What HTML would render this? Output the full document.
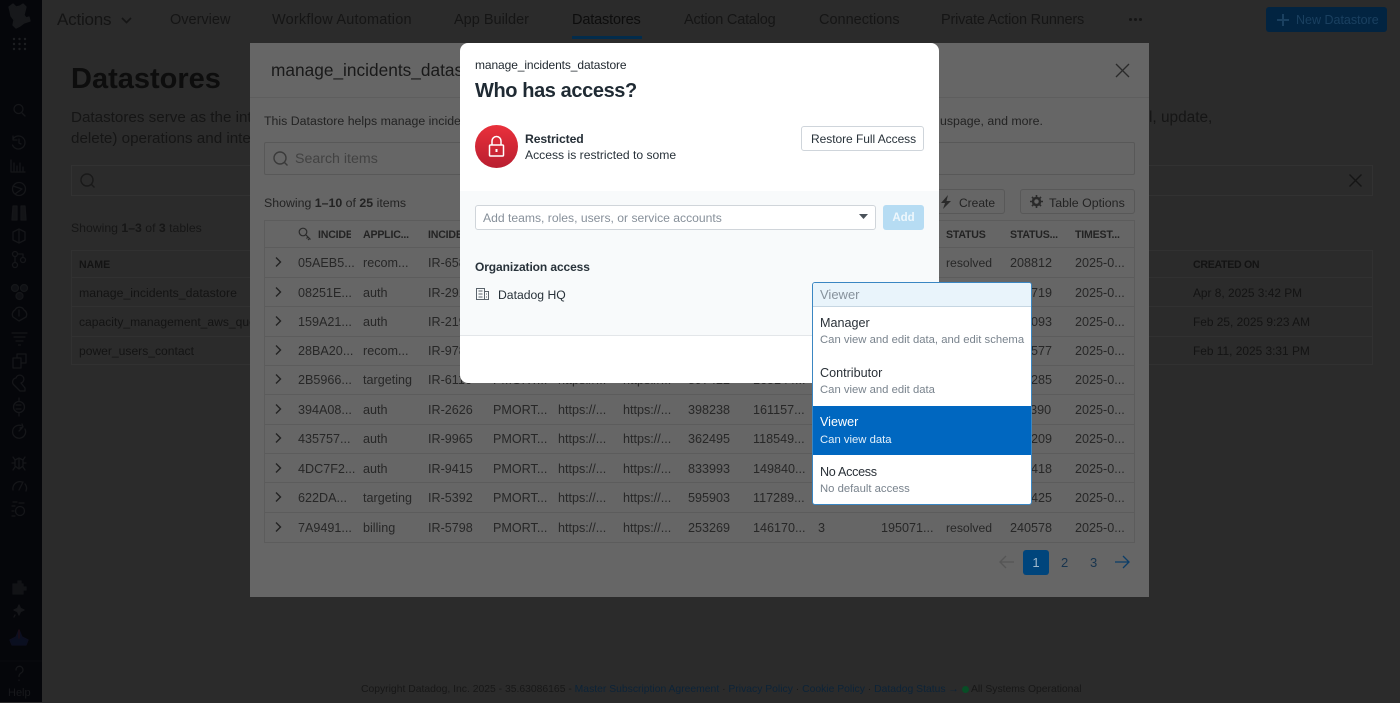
<!DOCTYPE html>
<html lang="en"><head><meta charset="utf-8"><title>Datastores</title>
<style>
html,body{margin:0;padding:0}
html{background:#2b2b2b}
body{width:1400px;height:702px;position:relative;overflow:hidden;background:#2b2b2b;font-family:"Liberation Sans","Noto Sans CJK JP",sans-serif;color:#161616;filter:blur(.3px)}
.a{position:absolute}
.t{position:absolute;white-space:nowrap;line-height:20px;height:20px}
b{font-weight:700}
#side{left:0;top:0;width:42px;height:702px;background:#05060a}
#side svg{position:absolute;left:0;top:0;opacity:.6}
.n{font-size:14.500px;top:10px;color:#151515}
.bt{font-size:12.100px;color:#131313}
.dt{font-size:11.900px;color:#131313}
#m1{left:250px;top:43px;width:899px;height:554px;background:#666;overflow:hidden}
#m1 .t{color:#232323}
.r{position:absolute;left:15px;width:870px;height:29px;border-bottom:1px solid #5c5c5c;font-size:12.600px}
.r span{position:absolute;top:5px;line-height:20px;white-space:nowrap;color:#272727}
.r svg{position:absolute;left:8px;top:8px}
.c1{left:33px}.c2{left:98px}.c3{left:163px}.c4{left:228px}.c5{left:293px}.c6{left:358px}.c7{left:423px}.c8{left:488px}.c9{left:553px}.c10{left:616px}.c11{left:681px;font-size:12.200px}.c12{left:745px}.c13{left:810px}
.h{font-size:10.600px;font-weight:700;letter-spacing:-.2px}
#m2{left:460px;top:43px;width:479px;height:340px;background:#fff;border-radius:8px;overflow:hidden}
#m2 .t{color:#28323a}
#dd{left:812px;top:282px;width:218px;height:221px;background:#fff;border:1px solid #3a86c2;border-radius:3px;overflow:hidden}
.op{position:absolute;left:0;width:218px;height:49px}
.op .x{position:absolute;left:7px;top:6px;font-size:12.600px;line-height:20px;color:#2a3138;white-space:nowrap}
.op .y{position:absolute;left:7px;top:25px;font-size:11.300px;line-height:18px;color:#79838d;white-space:nowrap}
</style></head><body>

<div class="a" id="side">
<svg width="42" height="702" fill="none" stroke="#202124" stroke-width="1.300" stroke-linecap="round" stroke-linejoin="round">
<path d="M9 7l4-3 3 3 4-1 3-2 3 3-1 4-1 4 2 3 3-1 1 4-6 2-4 3-4 2-3-3 1-5-3-4-1-5z" fill="#232427" stroke="#232427"/>
<g fill="#2d2e31" stroke="none"><circle cx="14" cy="39" r="1.200"/><circle cx="19.500" cy="39" r="1.200"/><circle cx="25" cy="39" r="1.200"/><circle cx="14" cy="44" r="1.200"/><circle cx="19.500" cy="44" r="1.200"/><circle cx="25" cy="44" r="1.200"/><circle cx="14" cy="49" r="1.200"/><circle cx="19.500" cy="49" r="1.200"/><circle cx="25" cy="49" r="1.200"/></g>
<circle cx="18.500" cy="109" r="4.500"/><path d="M22 113l3 3"/>
<path d="M13 139a6.500 6.500 0 1 1-.5 6M13 136v4h4M19 139v4l2 1"/>
<path d="M11 160v12h14M14 171v-8M17 171v-5M20 171v-8M23 171v-4"/>
<circle cx="19" cy="189" r="6.500"/><path d="M13 186l9 3-7 5"/>
<path d="M13 206h4v14h-5zM21 206h4l1 14h-5z" fill="#1d1e21"/>
<path d="M19 229l6 3v8l-6 3-6-3v-8zM19 229v14"/>
<circle cx="15" cy="254" r="2.500"/><circle cx="23" cy="260" r="2.500"/><circle cx="15" cy="265" r="2.500"/><path d="M15 257v5M18 254h5v3"/>
<circle cx="15" cy="288" r="3.500" fill="#17181b"/><circle cx="24" cy="288" r="3.500" fill="#17181b"/><circle cx="19.500" cy="296" r="3.500" fill="#17181b"/>
<path d="M13 317a5 5 0 0 1 2-7 5 5 0 0 1 9 0 5 5 0 0 1 2 7l-7 4z"/><path d="M19 310v6"/>
<path d="M12 333h15M14 337h11M16 341h7M18.500 345h2"/>
<path d="M13 358h4v-4h9v9h-5v5h-8zM13 358h8v5"/>
<path d="M16 378a4 4 0 1 1 5 5l4 5v3h-5l-6-6a4 4 0 0 1 2-7z"/>
<circle cx="19" cy="407" r="5.500"/><path d="M19 401v-3M19 413v3M16 405h5M16 409h5"/>
<path d="M25 429a6.500 6.500 0 1 1-4-3.500M19 431l3-3M22 424l1 3-3 1"/>
<path d="M15 460l4-2 4 2v6l-4 3-4-3zM13 457l2 3M25 457l-2 3M12 463h3M23 463h3M13 470l2-3M25 470l-2-3M19 458v10"/>
<path d="M13 490a7 7 0 0 1 9-8M25 484a7 7 0 0 1 1 7M19 490l4-8"/>
<circle cx="20" cy="511" r="4.500"/><path d="M13 502h4M12 506h3M12 511h2M12 516h3M19 503h5"/>
<path d="M13 584h5v-3h3v3h2v3h3v3h-3v4H13z" fill="#1b1c1f" stroke="#1b1c1f"/>
<path d="M19 605l1.500 3.500 3.500 1.500-3.500 1.500-1.500 3.500-1.500-3.500-3.500-1.500 3.500-1.500zM15 615l-1 2" fill="#222326"/>
<path d="M19 630l3 7 6 3-2 5h-14l-2-5 6-3z" fill="#0e1530" stroke="#11142e"/><path d="M19 630v8" stroke="#33131c"/>
<path d="M16 670a3.500 3.500 0 1 1 5 3c-1.500 1-2 2-2 3.500M19 680v.5"/>
<path d="M0 661h42" stroke="#0c0d10" stroke-width="1"/>
</svg>
<div class="t" style="left:8px;top:683px;font-size:11px;color:#18191c">Help</div>
</div>

<!-- nav -->
<div class="t" style="left:57px;top:10px;font-size:17px;color:#141414;letter-spacing:-.2px">Actions</div>
<svg class="a" style="left:120px;top:16px" width="13" height="10" fill="none" stroke="#151515" stroke-width="1.600"><path d="M2 2l4.500 4.500L11 2"/></svg>
<div class="t n" style="left:170px">Overview</div>
<div class="t n" style="left:272px;letter-spacing:.2px">Workflow Automation</div>
<div class="t n" style="left:454px">App Builder</div>
<div class="t n" style="left:572px;color:#0d0d0d;letter-spacing:-.15px">Datastores</div>
<div class="a" style="left:572px;top:36px;width:70px;height:3px;background:#022c4c"></div>
<div class="t n" style="left:684px;letter-spacing:-.2px">Action Catalog</div>
<div class="t n" style="left:819px">Connections</div>
<div class="t n" style="left:941px;letter-spacing:-.2px">Private Action Runners</div>
<div class="a" style="left:1129px;top:18px;width:3px;height:3px;background:#151515;border-radius:50%;box-shadow:5px 0 #151515,10px 0 #151515"></div>
<div class="a" style="left:1266px;top:7px;width:121px;height:25px;background:#022441;border-radius:3px"></div>
<svg class="a" style="left:1276px;top:13px" width="14" height="14" fill="none" stroke="#1a4060" stroke-width="2"><path d="M7 1v12M1 7h12"/></svg>
<div class="t" style="left:1296px;top:10px;font-size:12.500px;color:#1a4060">New Datastore</div>

<!-- page -->
<div class="t" style="left:71px;top:61px;height:36px;line-height:36px;font-size:29px;font-weight:700;color:#0d0d0d">Datastores</div>
<div class="t" style="left:71px;top:108px;font-size:15.200px;color:#151515">Datastores serve as the int</div>
<div class="t" style="left:71px;top:129px;font-size:15.200px;color:#151515">delete) operations and inte</div>
<div class="t" style="left:1149px;top:108px;font-size:15.400px;color:#151515">l, update,</div>
<div class="a" style="left:71px;top:165px;width:1302px;height:31px;border:1px solid #323232;box-sizing:border-box"></div>
<svg class="a" style="left:79px;top:172px" width="18" height="18" fill="none" stroke="#191919" stroke-width="1.400"><circle cx="8" cy="8" r="6"/><path d="M12.500 12.500l3 3"/></svg>
<svg class="a" style="left:1348px;top:173px" width="15" height="15" fill="none" stroke="#151515" stroke-width="1.400"><path d="M1.500 1.500l12 12M13.500 1.500l-12 12"/></svg>
<div class="t" style="left:71px;top:218px;font-size:12.250px;color:#161616">Showing <b>1–3</b> of <b>3</b> tables</div>
<div class="a" style="left:71px;top:250px;width:1302px;height:115px;border:1px solid #313131;box-sizing:border-box"></div>
<div class="a" style="left:72px;top:277px;width:1300px;height:1px;background:#313131"></div>
<div class="a" style="left:72px;top:306px;width:1300px;height:1px;background:#313131"></div>
<div class="a" style="left:72px;top:336px;width:1300px;height:1px;background:#313131"></div>
<div class="t h" style="left:79px;top:255px;color:#131313;letter-spacing:0">NAME</div>
<div class="t bt" style="left:79px;top:283px;font-size:12.300px">manage_incidents_datastore</div>
<div class="t bt" style="left:79px;top:312px">capacity_management_aws_quotas</div>
<div class="t bt" style="left:79px;top:341px">power_users_contact</div>
<div class="t h" style="left:1193px;top:255px;color:#131313;letter-spacing:-.3px">CREATED ON</div>
<div class="t dt" style="left:1193px;top:283px">Apr 8, 2025 3:42 PM</div>
<div class="t dt" style="left:1193px;top:312px">Feb 25, 2025 9:23 AM</div>
<div class="t dt" style="left:1193px;top:341px">Feb 11, 2025 3:31 PM</div>

<!-- footer -->
<div class="t" style="left:361px;top:680px;font-size:10.370px;color:#171717">Copyright Datadog, Inc. 2025 - 35.63086165 - <span style="color:#0c2338">Master Subscription Agreement</span> · <span style="color:#0c2338">Privacy Policy</span> · <span style="color:#0c2338">Cookie Policy</span> · <span style="color:#0c2338">Datadog Status →</span> <span style="display:inline-block;width:7px;height:7px;border-radius:50%;background:#084d26;vertical-align:-0.5px"></span> All Systems Operational</div>

<!-- first modal -->
<div class="a" id="m1">
<div class="t" style="left:21px;top:17px;font-size:17.300px;color:#191919">manage_incidents_datastore</div>
<svg class="a" style="left:865px;top:20px" width="15" height="15" fill="none" stroke="#2a2a2a" stroke-width="1.300"><path d="M1 1l13 13M14 1L1 14"/></svg>
<div class="a" style="left:0;top:54px;width:899px;height:1px;background:#5e5e5e"></div>
<div class="t" style="left:14px;top:68px;font-size:12.350px">This Datastore helps manage incidents</div>
<div class="t" style="left:690px;top:68px;font-size:12.350px">uspage, and more.</div>
<div class="a" style="left:14px;top:99px;width:871px;height:33px;border:1px solid #585858;box-sizing:border-box;border-radius:2px"></div>
<svg class="a" style="left:22px;top:107px" width="18" height="18" fill="none" stroke="#3a3a3a" stroke-width="1.400"><circle cx="8" cy="8" r="6"/><path d="M12.500 12.500l3 3"/></svg>
<div class="t" style="left:45px;top:106px;font-size:14.200px;color:#424242!important">Search items</div>
<div class="t" style="left:14px;top:150px;font-size:12.350px">Showing <b>1–10</b> of <b>25</b> items</div>
<div class="a" style="left:680px;top:146px;width:75px;height:25px;border:1px solid #585858;border-radius:3px;box-sizing:border-box"></div>
<svg class="a" style="left:690px;top:152px" width="12" height="14"><path d="M8 0L1 8h4l-2 6 8-8H6.500z" fill="#2a2a2a"/></svg>
<div class="t" style="left:709px;top:150px;font-size:12px">Create</div>
<div class="a" style="left:770px;top:146px;width:115px;height:25px;border:1px solid #585858;border-radius:3px;box-sizing:border-box"></div>
<svg class="a" style="left:780px;top:152px" width="13" height="13"><circle cx="6.500" cy="6.500" r="3.500" fill="none" stroke="#2a2a2a" stroke-width="2.500"/><path d="M6.500 0v3M6.500 10v3M0 6.500h3M10 6.500h3M2 2l2 2M9 9l2 2M11 2L9 4M4 9l-2 2" stroke="#2a2a2a" stroke-width="1.600"/></svg>
<div class="t" style="left:799px;top:150px;font-size:12.400px">Table Options</div>

<div class="a" style="left:14px;top:177px;width:871px;height:323px;border:1px solid #5c5c5c;box-sizing:border-box"></div>
<div class="a" style="left:15px;top:178px;width:870px;height:26px;border-bottom:1px solid #5c5c5c"></div>
<svg class="a" style="left:48px;top:184px" width="14" height="14" fill="none" stroke="#2a2a2a" stroke-width="1.200"><circle cx="5" cy="5" r="3.800"/><path d="M7.500 7.500l5 5M10 10l-1.500 1.500M11.500 11.500L10 13"/></svg>
<div class="t h" style="left:68px;top:182px;width:33px;overflow:hidden">INCIDENT</div>
<div class="t h" style="left:113px;top:182px">APPLIC...</div>
<div class="t h" style="left:178px;top:182px">INCIDENT</div>
<div class="t h" style="left:696px;top:182px">STATUS</div>
<div class="t h" style="left:760px;top:182px">STATUS...</div>
<div class="t h" style="left:825px;top:182px">TIMEST...</div>

<div class="r" style="top:205px"><svg width="10" height="12" fill="none" stroke="#222" stroke-width="1.400"><path d="M3 1.500L7.500 6 3 10.500"/></svg><span class="c1">05AEB5...</span><span class="c2">recom...</span><span class="c3">IR-6585</span><span class="c11">resolved</span><span class="c12">208812</span><span class="c13">2025-0...</span></div>
<div class="r" style="top:235px;height:28px"><svg width="10" height="12" fill="none" stroke="#222" stroke-width="1.400"><path d="M3 1.500L7.500 6 3 10.500"/></svg><span class="c1">08251E...</span><span class="c2">auth</span><span class="c3">IR-2911</span><span class="c12">241719</span><span class="c13">2025-0...</span></div>
<div class="r" style="top:264px"><svg width="10" height="12" fill="none" stroke="#222" stroke-width="1.400"><path d="M3 1.500L7.500 6 3 10.500"/></svg><span class="c1">159A21...</span><span class="c2">auth</span><span class="c3">IR-2190</span><span class="c12">363093</span><span class="c13">2025-0...</span></div>
<div class="r" style="top:293px"><svg width="10" height="12" fill="none" stroke="#222" stroke-width="1.400"><path d="M3 1.500L7.500 6 3 10.500"/></svg><span class="c1">28BA20...</span><span class="c2">recom...</span><span class="c3">IR-9780</span><span class="c12">219577</span><span class="c13">2025-0...</span></div>
<div class="r" style="top:322px"><svg width="10" height="12" fill="none" stroke="#222" stroke-width="1.400"><path d="M3 1.500L7.500 6 3 10.500"/></svg><span class="c1">2B5966...</span><span class="c2">targeting</span><span class="c3">IR-6116</span><span class="c4">PMORT...</span><span class="c5">https://...</span><span class="c6">https://...</span><span class="c7">897422</span><span class="c8">165144...</span><span class="c12">402285</span><span class="c13">2025-0...</span></div>
<div class="r" style="top:352px"><svg width="10" height="12" fill="none" stroke="#222" stroke-width="1.400"><path d="M3 1.500L7.500 6 3 10.500"/></svg><span class="c1">394A08...</span><span class="c2">auth</span><span class="c3">IR-2626</span><span class="c4">PMORT...</span><span class="c5">https://...</span><span class="c6">https://...</span><span class="c7">398238</span><span class="c8">161157...</span><span class="c12">118390</span><span class="c13">2025-0...</span></div>
<div class="r" style="top:381px"><svg width="10" height="12" fill="none" stroke="#222" stroke-width="1.400"><path d="M3 1.500L7.500 6 3 10.500"/></svg><span class="c1">435757...</span><span class="c2">auth</span><span class="c3">IR-9965</span><span class="c4">PMORT...</span><span class="c5">https://...</span><span class="c6">https://...</span><span class="c7">362495</span><span class="c8">118549...</span><span class="c12">725209</span><span class="c13">2025-0...</span></div>
<div class="r" style="top:411px;height:28px"><svg width="10" height="12" fill="none" stroke="#222" stroke-width="1.400"><path d="M3 1.500L7.500 6 3 10.500"/></svg><span class="c1">4DC7F2...</span><span class="c2">auth</span><span class="c3">IR-9415</span><span class="c4">PMORT...</span><span class="c5">https://...</span><span class="c6">https://...</span><span class="c7">833993</span><span class="c8">149840...</span><span class="c12">516418</span><span class="c13">2025-0...</span></div>
<div class="r" style="top:440px"><svg width="10" height="12" fill="none" stroke="#222" stroke-width="1.400"><path d="M3 1.500L7.500 6 3 10.500"/></svg><span class="c1">622DA...</span><span class="c2">targeting</span><span class="c3">IR-5392</span><span class="c4">PMORT...</span><span class="c5">https://...</span><span class="c6">https://...</span><span class="c7">595903</span><span class="c8">117289...</span><span class="c12">330425</span><span class="c13">2025-0...</span></div>
<div class="r" style="top:470px;border-bottom:0;height:28px"><svg width="10" height="12" fill="none" stroke="#222" stroke-width="1.400"><path d="M3 1.500L7.500 6 3 10.500"/></svg><span class="c1">7A9491...</span><span class="c2">billing</span><span class="c3">IR-5798</span><span class="c4">PMORT...</span><span class="c5">https://...</span><span class="c6">https://...</span><span class="c7">253269</span><span class="c8">146170...</span><span class="c9">3</span><span class="c10">195071...</span><span class="c11">resolved</span><span class="c12">240578</span><span class="c13">2025-0...</span></div>

<svg class="a" style="left:749px;top:512px" width="16" height="14" fill="none" stroke="#555" stroke-width="1.300"><path d="M15 7H1M7 1L1 7l6 6"/></svg>
<div class="a" style="left:773px;top:507px;width:26px;height:25px;background:#00457c;border-radius:3px;color:#9fb8cc;font-size:13px;line-height:25px;text-align:center">1</div>
<div class="t" style="left:811px;top:510px;font-size:13px;color:#18344e!important">2</div>
<div class="t" style="left:840px;top:510px;font-size:13px;color:#18344e!important">3</div>
<svg class="a" style="left:864px;top:512px" width="16" height="14" fill="none" stroke="#0b3d68" stroke-width="1.300"><path d="M1 7h14M9 1l6 6-6 6"/></svg>
</div>

<!-- second modal -->
<div class="a" id="m2">
<div class="t" style="left:15px;top:12px;font-size:12px;color:#1f272e;letter-spacing:-.1px">manage_incidents_datastore</div>
<div class="t" style="left:15px;top:35px;height:26px;line-height:26px;font-size:20px;font-weight:700;color:#1f2a33;letter-spacing:-.4px">Who has access?</div>
<svg class="a" style="left:15px;top:82px" width="44" height="44"><defs><linearGradient id="g" x1="0" y1="0" x2="0" y2="1"><stop offset="0" stop-color="#e9303b"/><stop offset="1" stop-color="#b91e30"/></linearGradient></defs><circle cx="21.500" cy="21.500" r="21.500" fill="url(#g)"/><rect x="14.500" y="20" width="14" height="11" rx="1" fill="none" stroke="#fff" stroke-width="1.500"/><path d="M17 20v-4a4.500 4.500 0 0 1 9 0v4" fill="none" stroke="#fff" stroke-width="1.500"/><rect x="20.500" y="24" width="2" height="3" fill="#fff"/></svg>
<div class="t" style="left:65px;top:86px;font-size:12.200px;font-weight:700;color:#252e36;letter-spacing:-.1px">Restricted</div>
<div class="t" style="left:65px;top:102px;font-size:12.150px">Access is restricted to some</div>
<div class="a" style="left:341px;top:83px;width:123px;height:25px;border:1px solid #cfd5db;border-radius:3px;box-sizing:border-box"></div>
<div class="t" style="left:351px;top:86px;font-size:12px;letter-spacing:-.05px">Restore Full Access</div>
<div class="a" style="left:0;top:148px;width:479px;height:145px;background:#f8fafb;border-bottom:1px solid #e3e6e9;box-sizing:border-box"></div>
<div class="a" style="left:15px;top:162px;width:401px;height:25px;background:#fff;border:1px solid #d0d5da;border-radius:3px;box-sizing:border-box"></div>
<div class="t" style="left:23px;top:165px;font-size:12.150px;color:#87909a!important">Add teams, roles, users, or service accounts</div>
<svg class="a" style="left:399px;top:171px" width="10" height="6"><path d="M0 0h9L4.500 5z" fill="#4a525a"/></svg>
<div class="a" style="left:423px;top:162px;width:41px;height:25px;background:#b6dcf3;border-radius:3px;color:#eef7fc;font-size:11.500px;font-weight:700;line-height:26px;text-align:center">Add</div>
<div class="t" style="left:15px;top:214px;font-size:12px;font-weight:700;letter-spacing:-.1px">Organization access</div>
<svg class="a" style="left:15px;top:244px" width="15" height="14" fill="none" stroke="#5a636b" stroke-width="1"><rect x="1.500" y="1.500" width="8" height="11"/><path d="M9.500 4.500h4v8h-4M3.500 4h4M3.500 7h4M3.500 10h4M11 7h1M11 10h1"/></svg>
<div class="t" style="left:38px;top:242px;font-size:12.200px">Datadog HQ</div>
</div>

<!-- dropdown -->
<div class="a" id="dd">
<div class="a" style="left:0;top:0;width:218px;height:23px;background:#e9f4fb;border-bottom:1px solid #c6d6e2;color:#87929c;font-size:13px;line-height:24px;text-indent:7px">Viewer</div>
<div class="op" style="top:24px"><div class="x">Manager</div><div class="y" style="top:24px">Can view and edit data, and edit schema</div></div>
<div class="op" style="top:74px;height:48px"><div class="x">Contributor</div><div class="y" style="top:24px">Can view and edit data</div></div>
<div class="op" style="top:123px;background:#0067c0"><div class="x" style="color:#fff">Viewer</div><div class="y" style="color:#e3f0fa;top:25px">Can view data</div></div>
<div class="op" style="top:172px"><div class="x" style="letter-spacing:-.3px;top:7px">No Access</div><div class="y" style="top:25px">No default access</div></div>
</div>

</body></html>
